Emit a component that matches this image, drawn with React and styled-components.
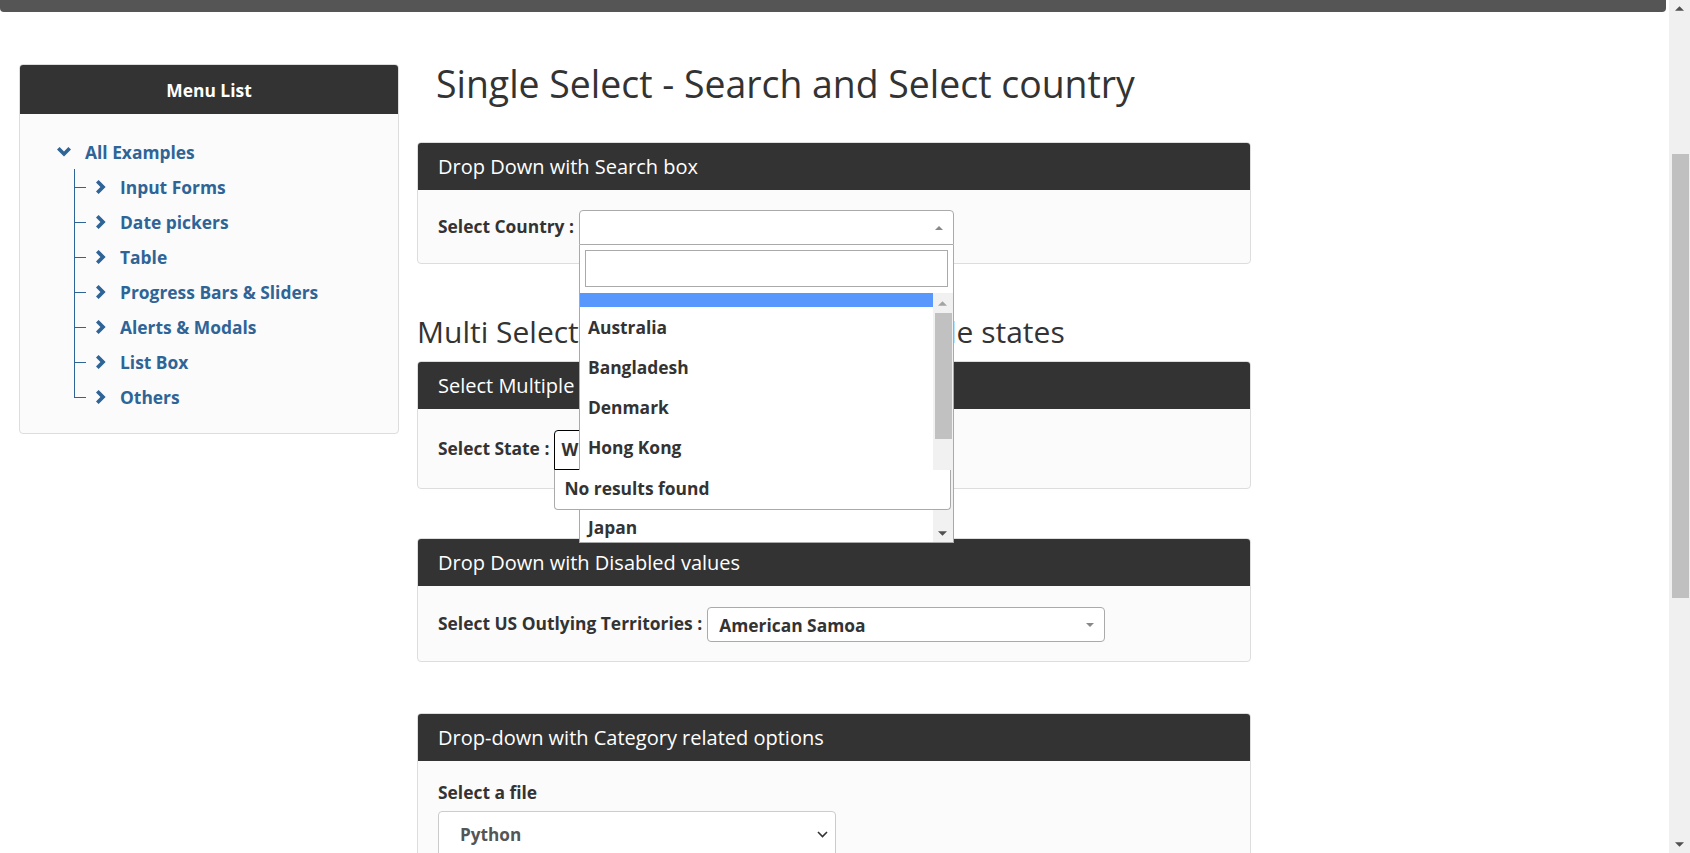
import React, { useLayoutEffect, useRef } from "react";
import styled, { createGlobalStyle } from "styled-components";

const Global = createGlobalStyle`
  html, body { margin: 0; padding: 0; height: 100%; overflow: hidden; background: #fff; }
  body { font-family: "Open Sans", "Liberation Sans", sans-serif; color: #333; }
  * { box-sizing: border-box; }
`;

const BOLD = "17.4px";
const BLUE = "#2f6497";

const Screen = styled.div`
  display: flex;
  width: 1690px;
  height: 853px;
  overflow: hidden;
`;

const Page = styled.div`
  flex: 1;
  min-width: 0;
  display: flex;
  flex-direction: column;
`;

const TopBar = styled.div`
  flex-shrink: 0;
  height: 12px;
  margin-right: 3px;
  background: #555;
  border-radius: 0 0 4px 4px;
`;

const Layout = styled.div`
  display: flex;
  align-items: flex-start;
  gap: 18px;
  padding: 52px 0 0 19px;
`;

/* ---------- sidebar ---------- */
const Sidebar = styled.aside`
  width: 380px;
  flex-shrink: 0;
  border: 1px solid #ddd;
  border-radius: 4px;
  background: #fbfbfb;
  overflow: hidden;
`;

const SideHeader = styled.div`
  height: 49px;
  display: flex;
  align-items: center;
  justify-content: center;
  background: #333;
  color: #fff;
  font-size: ${BOLD};
  font-weight: 700;
`;

const SideBody = styled.div`
  padding: 20px 0 19px;
`;

const Tree = styled.ul`
  list-style: none;
  margin: 0;
  padding: 0;
`;

const TreeItem = styled.li`
  position: relative;
  ${(p) =>
    p.$branch
      ? `
    &::before {
      content: "";
      position: absolute;
      left: 54px;
      top: 0;
      width: 1px;
      height: ${p.$last ? "50%" : "100%"};
      background: ${BLUE};
    }
    &::after {
      content: "";
      position: absolute;
      left: 54px;
      top: 50%;
      width: 12px;
      height: 1px;
      background: ${BLUE};
    }
  `
      : ""}
`;

const TreeRow = styled.div`
  display: flex;
  align-items: center;
  height: 35px;
  padding-left: ${(p) => p.$indent}px;
  gap: ${(p) => p.$gap}px;
  color: ${BLUE};
  font-size: ${BOLD};
  font-weight: 700;
  white-space: nowrap;
`;

const ChevronRight = () => (
  <svg width="11" height="14" viewBox="0 0 11 14" aria-hidden="true">
    <polygon points="0,2.6 2.6,0 9.6,7 2.6,14 0,11.4 4.4,7" fill={BLUE} />
  </svg>
);

const ChevronDown = () => (
  <svg width="14" height="10" viewBox="0 0 14 10" aria-hidden="true">
    <polygon points="0,2.6 2.6,0 7,4.4 11.4,0 14,2.6 7,9.6" fill={BLUE} />
  </svg>
);

/* ---------- content ---------- */
const Content = styled.main`
  width: 834px;
  flex-shrink: 0;
`;

const Title = styled.h1`
  margin: 0 0 38px 19px;
  font-size: 37.4px;
  line-height: 40px;
  font-weight: 400;
  color: #333;
  white-space: nowrap;
`;

const SubTitle = styled.h2`
  margin: 51px 0 13px 0;
  font-size: 30px;
  line-height: 33px;
  font-weight: 400;
  color: #333;
  white-space: nowrap;
`;

const Panel = styled.section`
  border: 1px solid #ddd;
  border-radius: 4px;
  background: #fbfbfb;
  margin-top: ${(p) => p.$gap || 0}px;
`;

const PanelHeading = styled.div`
  height: 47px;
  display: flex;
  align-items: center;
  padding-left: 20px;
  background: #333;
  color: #fff;
  font-size: 20px;
  border-radius: 3px 3px 0 0;
  white-space: nowrap;
`;

const PanelBody = styled.div`
  padding: ${(p) => p.$pad || "20px 20px 18px"};
`;

const Field = styled.div`
  display: flex;
  align-items: center;
`;

const Label = styled.label`
  font-size: ${BOLD};
  font-weight: 700;
  color: #333;
  line-height: 22px;
  white-space: nowrap;
  display: ${(p) => (p.$block ? "block" : "inline")};
  margin: ${(p) => (p.$block ? "0 0 8px 0" : "0 5px 4px 0")};
`;

const SelectWrap = styled.div`
  position: relative;
  width: ${(p) => p.$w}px;
`;

const SelectBox = styled.div`
  display: flex;
  align-items: center;
  height: 35px;
  padding: 0 10px 0 11px;
  border: 1px solid #aaa;
  border-radius: ${(p) => (p.$open ? "4px 4px 0 0" : "4px")};
  background: #fff;
  font-size: ${BOLD};
  font-weight: 700;
  color: #333;
`;

const Caret = styled.span`
  margin-left: auto;
  display: flex;
`;

const TriUp = ({ color = "#888", w = 8, h = 4 }) => (
  <svg width={w} height={h} viewBox="0 0 8 4" aria-hidden="true">
    <polygon points="0,4 4,0 8,4" fill={color} />
  </svg>
);

const TriDown = ({ color = "#888", w = 8, h = 4 }) => (
  <svg width={w} height={h} viewBox="0 0 8 4" aria-hidden="true">
    <polygon points="0,0 8,0 4,4" fill={color} />
  </svg>
);

const Dropdown = styled.div`
  position: absolute;
  top: 100%;
  left: 0;
  width: 100%;
  height: 298px;
  z-index: 10;
  display: flex;
  flex-direction: column;
  background: #fff;
  border: 1px solid #aaa;
  border-top: none;
`;

const SearchBar = styled.div`
  padding: 5px 5px 0 5px;
`;

const SearchInput = styled.input`
  display: block;
  width: 100%;
  height: 37px;
  border: 1px solid #aaa;
  outline: none;
  background: #fff;
  font: inherit;
`;

const Results = styled.div`
  flex: 1;
  min-height: 0;
  margin-top: 6px;
  display: flex;
`;

const ResultList = styled.ul`
  flex: 1;
  margin: 0;
  padding: 0;
  list-style: none;
  overflow: hidden;
`;

const ResultItem = styled.li`
  height: 40px;
  display: flex;
  align-items: center;
  padding-left: 8px;
  font-size: ${BOLD};
  font-weight: 700;
  color: #333;
  background: ${(p) => (p.$active ? "#5897fb" : "transparent")};
`;

const MiniScroll = styled.div`
  width: 20px;
  flex-shrink: 0;
  display: flex;
  flex-direction: column;
  align-items: center;
  background: #f1f1f1;
`;

const MiniArrow = styled.div`
  height: ${(p) => p.$h}px;
  flex-shrink: 0;
  display: flex;
  align-items: center;
  justify-content: center;
  margin-top: ${(p) => (p.$end ? "auto" : "0")};
`;

const MiniThumb = styled.div`
  width: 17px;
  height: 126px;
  margin-left: 2px;
  background: #c1c1c1;
`;

const MultiBox = styled.div`
  height: 40px;
  display: flex;
  align-items: center;
  padding: 0 0 2px 6px;
  border: 1px solid #000;
  border-radius: 4px 4px 0 0;
  background: #fff;
  font-size: ${BOLD};
  font-weight: 700;
  color: #333;
`;

const NoResults = styled.div`
  position: absolute;
  top: 100%;
  left: 0;
  width: 100%;
  height: 40px;
  z-index: 20;
  display: flex;
  align-items: center;
  padding: 0 0 3px 9px;
  background: #fff;
  border: 1px solid #aaa;
  border-top: none;
  border-radius: 0 0 4px 4px;
  font-size: ${BOLD};
  font-weight: 700;
  color: #333;
`;

const NativeSelect = styled.div`
  width: 398px;
  height: 46px;
  display: flex;
  align-items: center;
  padding: 0 7px 0 21px;
  border: 1px solid #ccc;
  border-radius: 4px;
  background: #fff;
  font-size: 17.2px;
  font-weight: 700;
  color: #555;
`;

/* ---------- page scrollbar ---------- */
const PageScroll = styled.div`
  width: 21px;
  flex-shrink: 0;
  height: 100%;
  display: flex;
  flex-direction: column;
  background: #f0f0f0;
`;

const PageArrow = styled.div`
  height: 17px;
  flex-shrink: 0;
  display: flex;
  align-items: center;
  justify-content: center;
  margin-top: ${(p) => (p.$end ? "auto" : "0")};
`;

const PageThumb = styled.div`
  height: 444px;
  margin: 137px 1px 0 3px;
  background: #c0c0c0;
`;

const children = [
  "Input Forms",
  "Date pickers",
  "Table",
  "Progress Bars & Sliders",
  "Alerts & Modals",
  "List Box",
  "Others",
];

const countries = ["", "Australia", "Bangladesh", "Denmark", "Hong Kong", "India", "Japan", "Netherlands"];

export default function App() {
  const listRef = useRef(null);
  useLayoutEffect(() => {
    if (listRef.current) listRef.current.scrollTop = 26;
  }, []);

  return (
    <>
      <Global />
      <Screen>
        <Page>
          <TopBar />
          <Layout>
            <Sidebar>
              <SideHeader>Menu List</SideHeader>
              <SideBody>
                <Tree>
                  <TreeItem>
                    <TreeRow $indent={37} $gap={14}>
                      <ChevronDown />
                      All Examples
                    </TreeRow>
                    <Tree>
                      {children.map((c, i) => (
                        <TreeItem key={c} $branch $last={i === children.length - 1}>
                          <TreeRow $indent={76} $gap={13}>
                            <ChevronRight />
                            {c}
                          </TreeRow>
                        </TreeItem>
                      ))}
                    </Tree>
                  </TreeItem>
                </Tree>
              </SideBody>
            </Sidebar>

            <Content>
              <Title>Single Select - Search and Select country</Title>

              <Panel>
                <PanelHeading>Drop Down with Search box</PanelHeading>
                <PanelBody>
                  <Field>
                    <Label>Select Country :</Label>
                    <SelectWrap $w={375}>
                      <SelectBox $open>
                        <Caret>
                          <TriUp />
                        </Caret>
                      </SelectBox>
                      <Dropdown>
                        <SearchBar>
                          <SearchInput type="text" readOnly />
                        </SearchBar>
                        <Results>
                          <ResultList ref={listRef}>
                            {countries.map((c, i) => (
                              <ResultItem key={c || "empty"} $active={i === 0}>
                                {c}
                              </ResultItem>
                            ))}
                          </ResultList>
                          <MiniScroll>
                            <MiniArrow $h={20}>
                              <TriUp color="#a3a3a3" w={9} h={5} />
                            </MiniArrow>
                            <MiniThumb />
                            <MiniArrow $h={17} $end>
                              <TriDown color="#505050" w={9} h={5} />
                            </MiniArrow>
                          </MiniScroll>
                        </Results>
                      </Dropdown>
                    </SelectWrap>
                  </Field>
                </PanelBody>
              </Panel>

              <SubTitle>Multi Select - Search and Select multiple states</SubTitle>

              <Panel>
                <PanelHeading>Select Multiple Values</PanelHeading>
                <PanelBody $pad="21px 20px 18px">
                  <Field>
                    <Label>Select State :</Label>
                    <SelectWrap $w={397}>
                      <MultiBox>W</MultiBox>
                      <NoResults>No results found</NoResults>
                    </SelectWrap>
                  </Field>
                </PanelBody>
              </Panel>

              <Panel $gap={49}>
                <PanelHeading>Drop Down with Disabled values</PanelHeading>
                <PanelBody $pad="21px 20px 19px">
                  <Field>
                    <Label>Select US Outlying Territories :</Label>
                    <SelectWrap $w={398}>
                      <SelectBox>
                        American Samoa
                        <Caret>
                          <TriDown />
                        </Caret>
                      </SelectBox>
                    </SelectWrap>
                  </Field>
                </PanelBody>
              </Panel>

              <Panel $gap={51}>
                <PanelHeading>Drop-down with Category related options</PanelHeading>
                <PanelBody>
                  <Label $block>Select a file</Label>
                  <NativeSelect>
                    Python
                    <Caret>
                      <svg width="11" height="7" viewBox="0 0 11 7" aria-hidden="true">
                        <polyline points="1,1 5.5,5.5 10,1" fill="none" stroke="#333" strokeWidth="1.6" />
                      </svg>
                    </Caret>
                  </NativeSelect>
                </PanelBody>
              </Panel>
            </Content>
          </Layout>
        </Page>

        <PageScroll>
          <PageArrow>
            <TriUp color="#505050" w={9} h={5} />
          </PageArrow>
          <PageThumb />
          <PageArrow $end>
            <TriDown color="#505050" w={9} h={5} />
          </PageArrow>
        </PageScroll>
      </Screen>
    </>
  );
}
